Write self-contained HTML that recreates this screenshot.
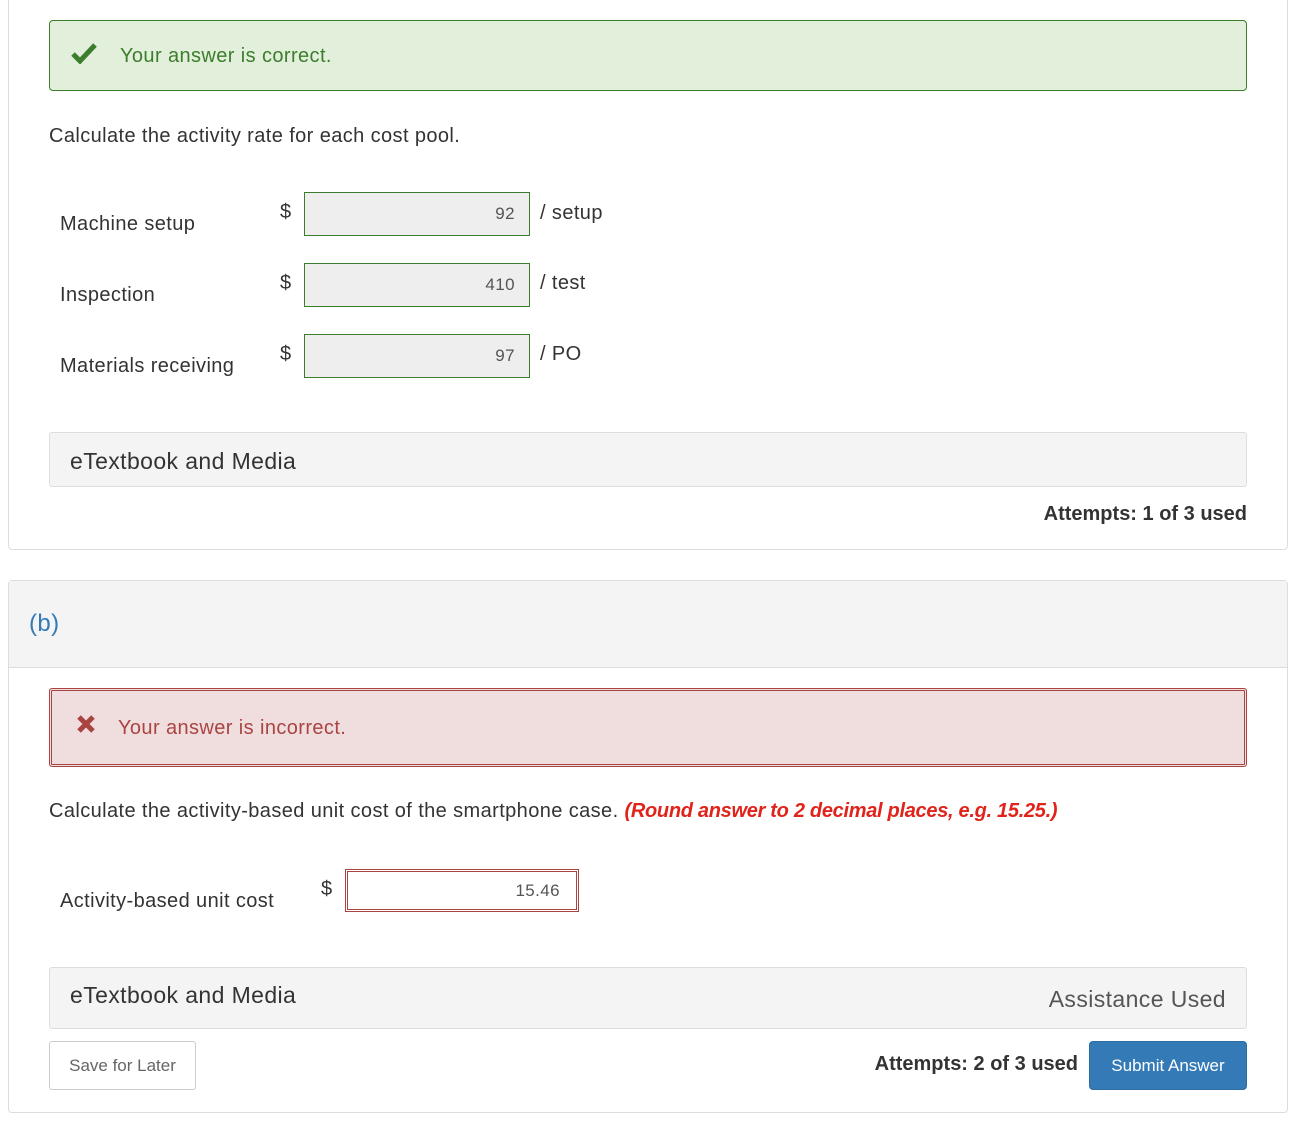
<!DOCTYPE html>
<html><head><meta charset="utf-8"><style>
*{box-sizing:border-box;margin:0;padding:0}
body{width:1289px;height:1122px;background:#fff;font-family:"Liberation Sans",sans-serif;color:#333;position:relative;overflow:hidden;letter-spacing:0.4px}
.a{position:absolute;white-space:nowrap}
.card{position:absolute;left:8px;width:1280px;border:1px solid #ddd;border-radius:4px;background:#fff}
.inp{position:absolute;height:44px;background:#eee;border:1px solid #3c7d2e;text-align:right;padding-right:14px;font-size:17px;line-height:42px;color:#555}
.lbl{position:absolute;font-size:20px;color:#333;white-space:nowrap}
.box{position:absolute;left:49px;width:1198px;background:#f4f4f4;border:1px solid #ddd;border-radius:3px}
</style></head><body>
<div class="card" style="top:-10px;height:560px"></div>
<div class="a" style="left:49px;top:20px;width:1198px;height:71px;background:#e2efda;border:1px solid #3c7d2e;border-radius:4px"></div>
<svg class="a" style="left:71px;top:42px" width="26" height="22" viewBox="0 0 26 22"><path d="M2 12 L9 19 L24 3" stroke="#3c7d2e" stroke-width="5" fill="none"/></svg>
<div class="a" style="left:120px;top:45px;font-size:20px;color:#3c7d2e">Your answer is correct.</div>
<div class="a" style="left:49px;top:125px;font-size:20px">Calculate the activity rate for each cost pool.</div>

<div class="lbl" style="left:60px;top:213px">Machine setup</div>
<div class="lbl" style="left:280px;top:201px">$</div>
<div class="inp" style="left:304px;top:192px;width:226px">92</div>
<div class="lbl" style="left:540px;top:202px">/ setup</div>

<div class="lbl" style="left:60px;top:284px">Inspection</div>
<div class="lbl" style="left:280px;top:272px">$</div>
<div class="inp" style="left:304px;top:263px;width:226px">410</div>
<div class="lbl" style="left:540px;top:272px">/ test</div>

<div class="lbl" style="left:60px;top:355px">Materials receiving</div>
<div class="lbl" style="left:280px;top:343px">$</div>
<div class="inp" style="left:304px;top:334px;width:226px">97</div>
<div class="lbl" style="left:540px;top:343px">/ PO</div>

<div class="box" style="top:432px;height:55px"></div>
<div class="a" style="left:70px;top:448px;font-size:23px">eTextbook and Media</div>
<div class="a" style="right:42px;top:503px;font-size:20px;font-weight:bold;letter-spacing:0">Attempts: 1 of 3 used</div>

<div class="card" style="top:580px;height:533px"></div>
<div class="a" style="left:9px;top:581px;width:1278px;height:87px;background:#f4f4f4;border-bottom:1px solid #ddd"></div>
<div class="a" style="left:29px;top:610px;font-size:24px;color:#337ab7">(b)</div>

<div class="a" style="left:49px;top:688px;width:1198px;height:79px;background:#f0dede;border:3px double #a94442;border-radius:3px"></div>
<svg class="a" style="left:76px;top:714px" width="20" height="20" viewBox="0 0 20 20"><path d="M3 3 L17 17 M17 3 L3 17" stroke="#a94442" stroke-width="5"/></svg>
<div class="a" style="left:118px;top:717px;font-size:20px;color:#a94442">Your answer is incorrect.</div>

<div class="a" style="left:49px;top:800px;font-size:20px;white-space:nowrap">Calculate the activity-based unit cost of the smartphone case. <i style="color:#e0231b;font-weight:bold;letter-spacing:-0.3px">(Round answer to 2 decimal places, e.g. 15.25.)</i></div>

<div class="lbl" style="left:60px;top:890px">Activity-based unit cost</div>
<div class="lbl" style="left:321px;top:878px">$</div>
<div class="a" style="left:345px;top:869px;width:234px;height:43px;border:3px double #a94442;text-align:right;padding-right:16px;font-size:17px;line-height:37px;color:#555">15.46</div>

<div class="box" style="top:967px;height:62px"></div>
<div class="a" style="left:70px;top:982px;font-size:23px">eTextbook and Media</div>
<div class="a" style="right:63px;top:986px;font-size:23px;color:#555">Assistance Used</div>

<div class="a" style="left:49px;top:1041px;width:147px;height:49px;border:1px solid #ccc;border-radius:3px;font-size:17px;color:#666;text-align:center;line-height:47px;letter-spacing:0">Save for Later</div>
<div class="a" style="right:211px;top:1053px;font-size:20px;font-weight:bold;letter-spacing:0">Attempts: 2 of 3 used</div>
<div class="a" style="left:1089px;top:1041px;width:158px;height:49px;background:#337ab7;border:1px solid #2e6da4;border-radius:4px;color:#fff;font-size:17px;text-align:center;line-height:47px;letter-spacing:0">Submit Answer</div>
</body></html>
